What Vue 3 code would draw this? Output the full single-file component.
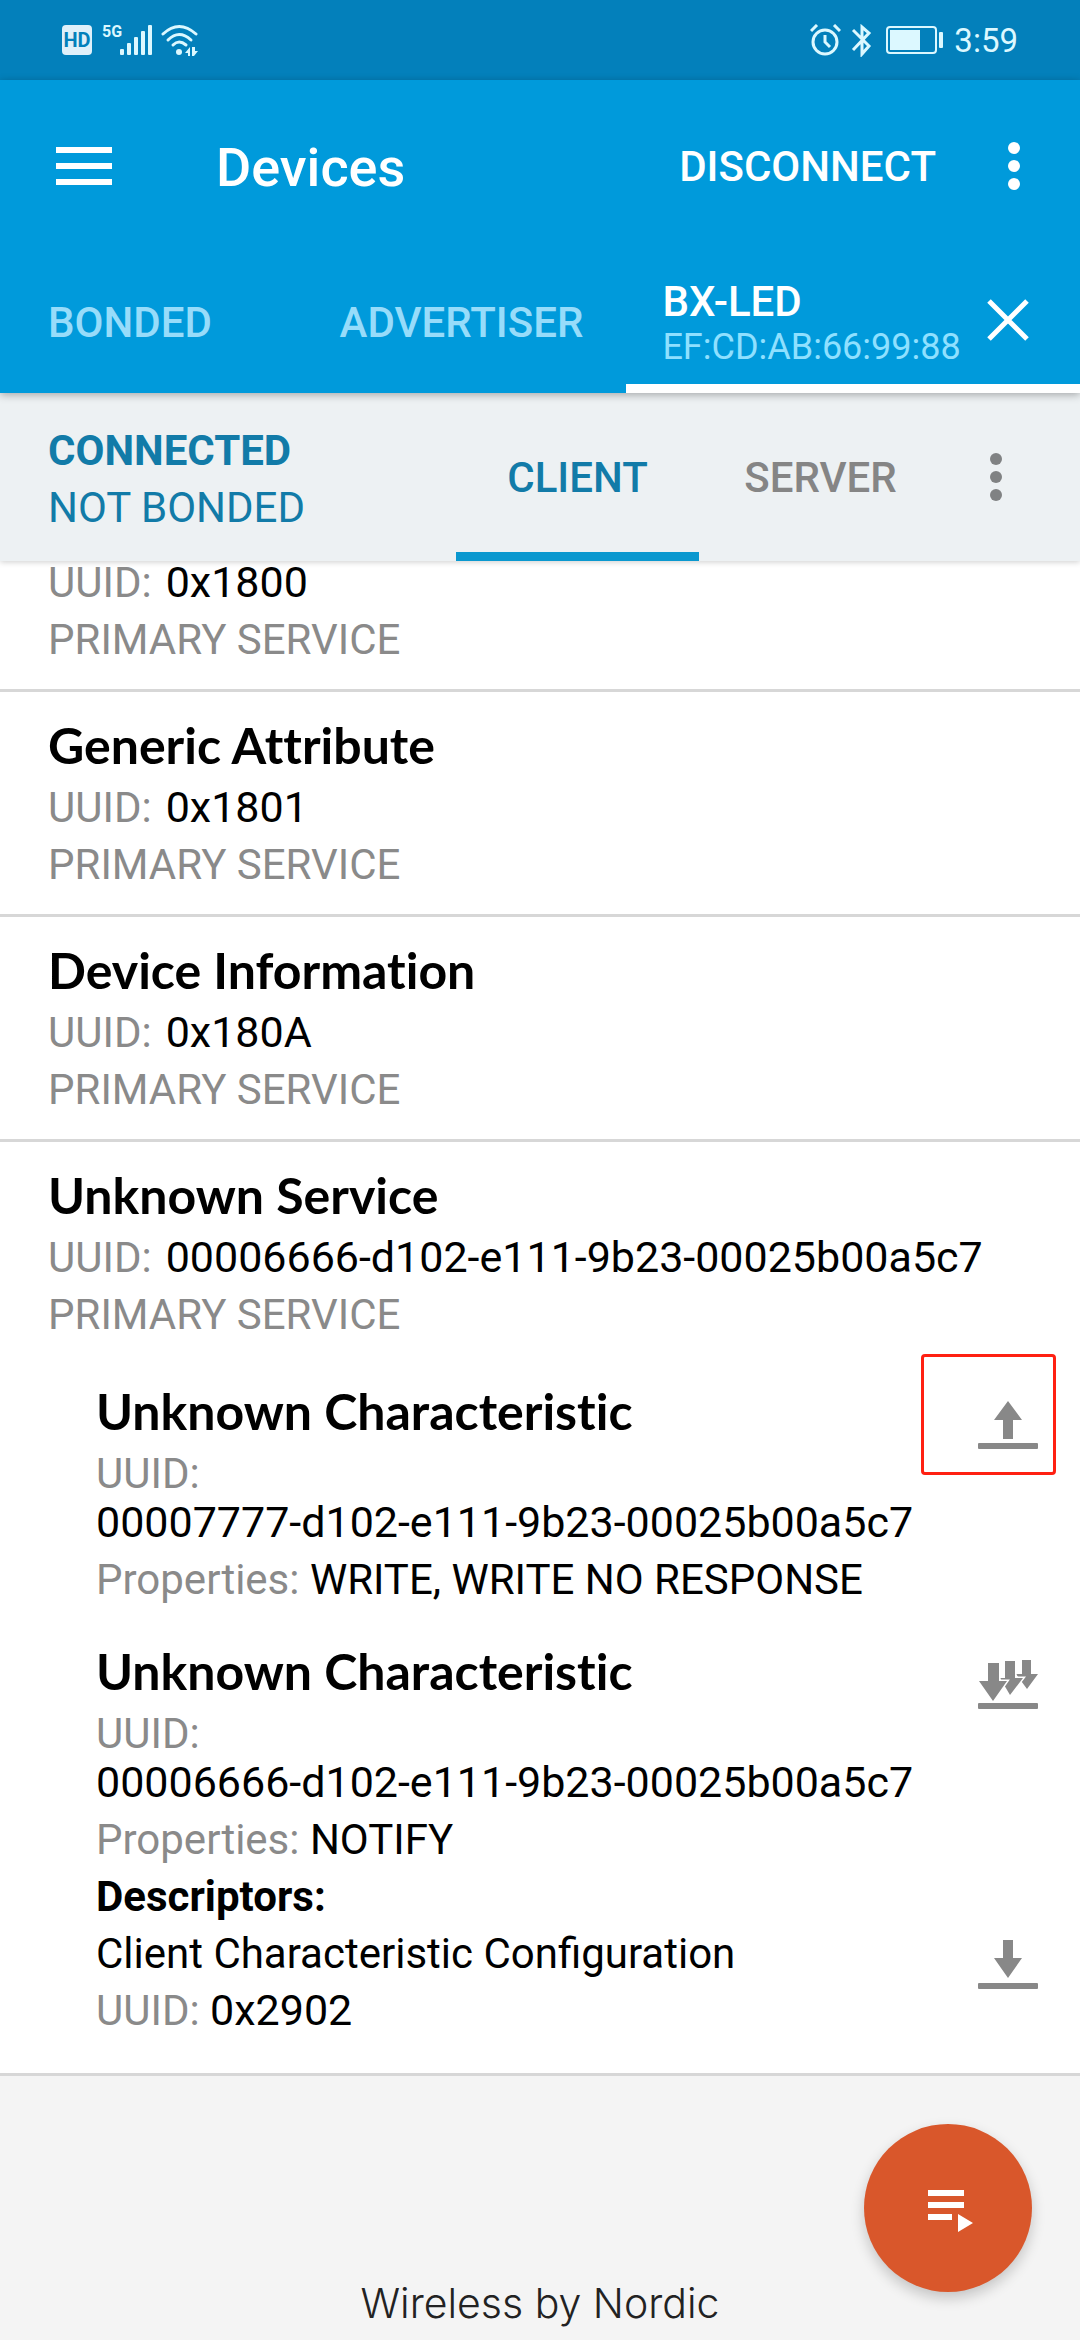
<script setup>
import { ref } from 'vue'

const services = [
  { name: '', uuid: '0x1800', characteristics: [] },
  { name: 'Generic Attribute', uuid: '0x1801', characteristics: [] },
  { name: 'Device Information', uuid: '0x180A', characteristics: [] },
  {
    name: 'Unknown Service',
    uuid: '00006666-d102-e111-9b23-00025b00a5c7',
    characteristics: [
      {
        name: 'Unknown Characteristic',
        uuid: '00007777-d102-e111-9b23-00025b00a5c7',
        properties: 'WRITE, WRITE NO RESPONSE',
        action: 'write',
        marked: true,
        descriptors: []
      },
      {
        name: 'Unknown Characteristic',
        uuid: '00006666-d102-e111-9b23-00025b00a5c7',
        properties: 'NOTIFY',
        action: 'notify',
        marked: false,
        descriptors: [{ name: 'Client Characteristic Configuration', uuid: '0x2902' }]
      }
    ]
  }
]

const role = ref('client')
</script>

<template>
  <div class="app">
    <div class="status">
      <span class="hd">HD</span>
      <div class="signal">
        <span class="net">5G</span>
        <svg width="33" height="32" viewBox="0 0 33 32" fill="currentColor" aria-hidden="true">
          <rect x="0" y="25" width="4" height="6" rx="1" />
          <rect x="7" y="19" width="4" height="12" rx="1" />
          <rect x="14" y="13" width="4" height="18" rx="1" />
          <rect x="21" y="7" width="4" height="24" rx="1" />
          <rect x="28" y="1" width="4" height="30" rx="1" />
        </svg>
      </div>
      <svg class="wifi" width="38" height="32" viewBox="0 0 38 32" aria-hidden="true">
        <g fill="none" stroke="currentColor" stroke-width="3" stroke-linecap="round">
          <path d="M2 10Q18 -5 35 10" />
          <path d="M7 16Q18 5 30 16" />
          <path d="M12 21Q18 15 25 21" />
        </g>
        <circle cx="18" cy="28" r="3" fill="currentColor" />
        <path d="M29 23v9h-2v-3h-3zM31 23v9h2l4-5h-3v-4z" fill="currentColor" />
      </svg>
      <span class="spacer"></span>
      <svg width="31" height="32" viewBox="0 0 31 32" fill="none" stroke="currentColor" stroke-width="3" aria-hidden="true">
        <circle cx="15" cy="18" r="12" />
        <path d="M15 11v7l5 5" />
        <path d="M1 7l6-6M30 7l-6-6" />
      </svg>
      <svg class="bt" width="21" height="33" viewBox="0 0 21 33" fill="none" stroke="currentColor" stroke-width="3" aria-hidden="true">
        <path d="M2 6l16 16-7 8V3l7 6L2 26" />
      </svg>
      <svg class="battery" width="58" height="28" viewBox="0 0 58 28" aria-hidden="true">
        <rect x="1" y="1" width="49" height="26" rx="3" fill="none" stroke="currentColor" stroke-width="2" />
        <rect x="4" y="4" width="30" height="20" fill="currentColor" />
        <rect x="53" y="6" width="4" height="16" rx="1" fill="currentColor" />
      </svg>
      <time class="clock">3:59</time>
    </div>

    <header class="header">
      <div class="bar">
        <button class="icon" aria-label="Menu">
          <svg width="56" height="38" viewBox="0 0 56 38" fill="currentColor">
            <path d="M0 0h56v6H0zM0 16h56v6H0zM0 32h56v6H0z" />
          </svg>
        </button>
        <h1>Devices</h1>
        <button class="disconnect">DISCONNECT</button>
        <button class="icon" aria-label="More options">
          <svg width="12" height="48" viewBox="0 0 12 48" fill="currentColor">
            <circle cx="6" cy="6" r="6" /><circle cx="6" cy="24" r="6" /><circle cx="6" cy="42" r="6" />
          </svg>
        </button>
      </div>
      <nav class="tabs">
        <button class="tab">BONDED</button>
        <button class="tab">ADVERTISER</button>
        <div class="tab current">
          <button class="device">
            <span class="device-name">BX-LED</span>
            <span class="device-mac">EF:CD:AB:66:99:88</span>
          </button>
          <button class="icon close" aria-label="Close tab">
            <svg width="42" height="42" viewBox="0 0 42 42" fill="none" stroke="currentColor" stroke-width="5">
              <path d="M2 2l38 38M40 2L2 40" />
            </svg>
          </button>
        </div>
      </nav>
    </header>

    <section class="connection">
      <div class="state">
        <strong>CONNECTED</strong>
        <span>NOT BONDED</span>
      </div>
      <button class="role" :class="{ active: role === 'client' }" @click="role = 'client'">CLIENT</button>
      <button class="role" :class="{ active: role === 'server' }" @click="role = 'server'">SERVER</button>
      <button class="icon more" aria-label="Connection options">
        <svg width="12" height="48" viewBox="0 0 12 48" fill="currentColor">
          <circle cx="6" cy="6" r="6" /><circle cx="6" cy="24" r="6" /><circle cx="6" cy="42" r="6" />
        </svg>
      </button>
    </section>

    <main class="list">
      <section v-for="service in services" :key="service.uuid" class="service" :class="{ scrolled: !service.name }">
        <div class="lines service-lines">
          <h2 v-if="service.name">{{ service.name }}</h2>
          <p class="pair"><span class="label">UUID:</span><span class="value">{{ service.uuid }}</span></p>
          <p class="label">PRIMARY SERVICE</p>
        </div>

        <div v-if="service.characteristics.length" class="characteristics">
          <article v-for="item in service.characteristics" :key="item.uuid" class="lines">
            <div class="row">
              <div class="lines grow">
                <h2>{{ item.name }}</h2>
                <p><span class="label">UUID: </span><span class="value">{{ item.uuid }}</span></p>
                <p><span class="label">Properties: </span>{{ item.properties }}</p>
              </div>
              <button class="icon action" :aria-label="item.action">
                <svg v-if="item.action === 'write'" width="60" height="52" viewBox="0 0 60 52" fill="currentColor">
                  <path d="M30 4L44 23H35V42H25V23H16z" />
                  <rect y="46" width="60" height="6" rx="1" />
                </svg>
                <svg v-else width="60" height="52" viewBox="0 0 60 52" fill="currentColor">
                  <path d="M44 3h9v14h7L49 32 38 17h6z" />
                  <path class="edge" d="M27 4h10v17h8L32 38 22 21h5z" />
                  <path class="edge" d="M10 6h11v18h8L15 44 1 24h9z" />
                  <rect y="46" width="60" height="6" rx="1" />
                </svg>
                <span v-if="item.marked" class="mark"></span>
              </button>
            </div>
            <template v-if="item.descriptors.length">
              <h3>Descriptors:</h3>
              <div v-for="descriptor in item.descriptors" :key="descriptor.uuid" class="row">
                <div class="lines grow">
                  <p>{{ descriptor.name }}</p>
                  <p><span class="label">UUID: </span><span class="value">{{ descriptor.uuid }}</span></p>
                </div>
                <button class="icon action read" aria-label="read">
                  <svg width="60" height="52" viewBox="0 0 60 52" fill="currentColor">
                    <path d="M25 3h10v18h9L30 41 16 21h9z" />
                    <rect y="46" width="60" height="6" rx="1" />
                  </svg>
                </button>
              </div>
            </template>
          </article>
        </div>
      </section>
    </main>

    <footer class="footer">Wireless by Nordic</footer>

    <button class="fab" aria-label="Macros">
      <svg width="72" height="72" viewBox="0 0 72 72" fill="currentColor">
        <path d="M16 18h36v6H16zM16 30h36v6H16zM16 42h24v6H16zM46 42l15 9-15 9z" />
      </svg>
    </button>
  </div>
</template>

<style>
body {
  margin: 0;
  background: #f4f4f4;
}
</style>

<style scoped>
.app {
  display: flex;
  flex-direction: column;
  min-height: 100vh;
  font-family: Roboto, "Liberation Sans", sans-serif;
  font-size: 42px;
  line-height: 49px;
  color: #000;
}
button {
  border: 0;
  padding: 0;
  background: none;
  color: inherit;
  font: inherit;
  cursor: pointer;
}
h1, h2, h3, p {
  margin: 0;
}
svg {
  display: block;
}
.icon {
  display: flex;
  align-items: center;
  justify-content: center;
}

.status {
  display: flex;
  align-items: center;
  height: 80px;
  padding: 0 62px;
  background: #0380bb;
  color: #dcf8ff;
}
.hd {
  width: 30px;
  border-radius: 4px;
  background: #dff0fa;
  color: #0380bb;
  font-size: 20px;
  font-weight: 700;
  line-height: 30px;
  text-align: center;
}
.signal {
  display: flex;
  align-items: flex-start;
  margin-left: 10px;
}
.net {
  width: 18px;
  font-size: 16px;
  font-weight: 700;
  line-height: 16px;
}
.wifi {
  margin-left: 8px;
}
.spacer {
  flex: 1;
}
.bt {
  margin-left: 10px;
}
.battery {
  margin: 0 10px 0 14px;
}
.clock {
  font-size: 33px;
}

.header {
  position: relative;
  z-index: 2;
  background: #009adb;
  color: #fff;
  box-shadow: 0 2px 8px rgba(0, 0, 0, 0.3);
}
.bar {
  display: flex;
  align-items: center;
  height: 172px;
  padding: 0 60px 0 56px;
}
h1 {
  flex: 1;
  padding: 4px 0 0 104px;
  font-size: 54px;
  font-weight: 500;
  line-height: 64px;
}
.disconnect {
  margin-right: 72px;
  font-weight: 500;
}
.tabs {
  display: grid;
  grid-template-columns: 27% 31% 42%;
  height: 141px;
}
.tab {
  padding-left: 48px;
  color: #97dcfa;
  font-weight: 500;
  text-align: left;
}
.tab.current {
  display: flex;
  align-items: center;
  justify-content: space-between;
  padding: 9px 51px 0 36px;
  border-bottom: 9px solid #fff;
  color: #fff;
}
.device {
  display: flex;
  flex-direction: column;
  text-align: left;
}
.device-name {
  font-weight: 500;
}
.device-mac {
  color: #8fe0ff;
  font-size: 36px;
  font-weight: 400;
  line-height: 42px;
}
.close {
  padding-bottom: 5px;
}

.connection {
  position: relative;
  z-index: 1;
  display: flex;
  height: 168px;
  background: #edf1f3;
  box-shadow: 0 1px 6px rgba(0, 0, 0, 0.2);
}
.state {
  display: flex;
  flex: 1;
  flex-direction: column;
  justify-content: center;
  gap: 8px;
  padding: 3px 0 0 48px;
  color: #127ba8;
}
.role {
  width: 22.5%;
  border: solid transparent;
  border-width: 9px 0;
  color: #858585;
  font-weight: 500;
}
.role.active {
  border-bottom-color: #0a98cf;
  color: #127ba8;
}
.more {
  width: 108px;
  margin-right: 30px;
  color: #808283;
}

.list {
  background: #fff;
}
.service {
  border-bottom: 3px solid #d7d7d7;
}
.service-lines {
  padding: 24px 48px 0;
}
.service-lines:last-child {
  padding-bottom: 25px;
}
/* The first service is partly scrolled under the connection bar. */
.scrolled {
  margin-top: -27px;
}
.lines {
  display: flex;
  flex-direction: column;
  gap: 8px;
}
.grow {
  flex: 1;
}
.pair {
  display: flex;
  gap: 14px;
}
.label {
  color: #8a8a8a;
}
.value {
  font-size: 43px;
  white-space: nowrap;
}
h2 {
  font-family: "Trebuchet MS", Lato, sans-serif;
  font-size: 50px;
  font-variant-ligatures: none;
  font-weight: 700;
  line-height: 59px;
}
h3 {
  font-size: 42px;
  font-weight: 700;
}
.characteristics {
  display: flex;
  flex-direction: column;
  gap: 38px;
  padding: 43px 42px 38px 96px;
}
.row {
  display: flex;
  align-items: flex-start;
}
.action {
  position: relative;
  margin-top: 15px;
  color: #888;
}
.action.read {
  margin-top: 8px;
}
.edge {
  stroke: #fff;
  stroke-width: 3px;
  paint-order: stroke;
}
.mark {
  position: absolute;
  inset: -43px -18px -26px -57px;
  border: 3px solid #ff2012;
  border-radius: 4px;
}

.footer {
  display: flex;
  flex: 1;
  align-items: flex-end;
  justify-content: center;
  padding-bottom: 12px;
  background: #f4f4f4;
  color: #222;
  font-family: Inter, sans-serif;
  font-size: 41px;
  font-weight: 300;
}
.fab {
  position: fixed;
  right: 48px;
  bottom: 48px;
  z-index: 3;
  display: flex;
  align-items: center;
  justify-content: center;
  width: 168px;
  height: 168px;
  border-radius: 50%;
  background: #d9572b;
  color: #fff;
  box-shadow: 0 6px 14px rgba(0, 0, 0, 0.2);
}
</style>
